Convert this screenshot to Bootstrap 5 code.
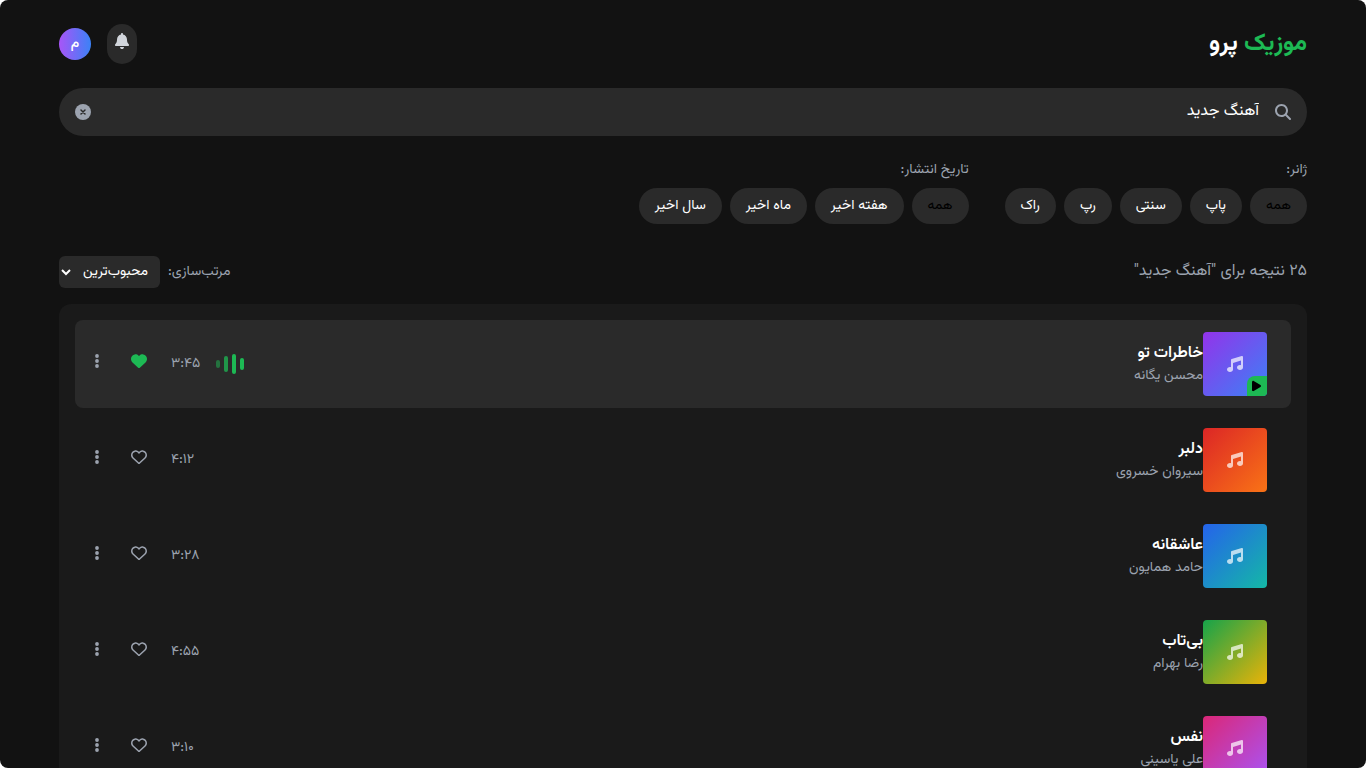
<!DOCTYPE html>
<html lang="fa" dir="rtl">
<head>
<meta charset="utf-8">
<meta name="viewport" content="width=device-width, initial-scale=1">
<title>موزیک پرو</title>
<link href="https://cdn.jsdelivr.net/npm/bootstrap@5.3.0/dist/css/bootstrap.min.css" rel="stylesheet">
<style>
  html, body { background: #fff; }
  body { font-family: Vazirmatn, Vazir, "DejaVu Sans", sans-serif; font-size: 16px; line-height: 24px; color: #fff; }
  .app-shell { background: #121212; border-radius: 8px; overflow-y: auto; scrollbar-width: none; }
  .app-shell::-webkit-scrollbar { display: none; }
  .app-wrap { max-width: 1280px; }
  .brand { font-size: 24px; line-height: 32px; }
  .muted { color: #9ca3af; }
  .accent { color: #1db954; }
  .text-14 { font-size: 14px; line-height: 20px; }
  .icon { width: 16px; height: 16px; fill: currentColor; display: block; }
  .bell-btn { background: #2a2a2a; color: #d1d5db; height: 40px; padding: 8px 8px 14px; }
  .bell-btn .icon { width: 14px; }
  .avatar { width: 32px; height: 32px; font-weight: 500; background: linear-gradient(to right, #a855f7, #3b82f6); }
  .search-input, .search-input:focus { background: #2a2a2a; color: #fff; height: 48px; padding: 0 48px 2px; font-size: 16px; }
  .search-side { width: 16px; top: 16px; }
  .search-side.start { right: 16px; }
  .search-side.end { left: 16px; }
  .chip { background: #2a2a2a; color: #fff; height: 36px; padding: 0 16px; }
  .chip.on { color: #000; }
  .filters { column-gap: 36px; row-gap: 16px; }
  .sort-select { background: #2a2a2a; color: #fff; height: 32px; border-radius: 6px; padding: 0 8px; }
  .panel { background: #1a1a1a; border-radius: 12px; }
  .song { padding: 12px; border-radius: 8px; }
  .song.playing { background: #2a2a2a; }
  .song-title { font-size: 16px; line-height: 24px; font-weight: 600; }
  .cover { width: 64px; height: 64px; border-radius: 4px; margin-right: 12px; color: rgba(255,255,255,.7); }
  .c1 { background: linear-gradient(to bottom right, #9333ea, #3b82f6); }
  .c2 { background: linear-gradient(to bottom right, #dc2626, #f97316); }
  .c3 { background: linear-gradient(to bottom right, #2563eb, #14b8a6); }
  .c4 { background: linear-gradient(to bottom right, #16a34a, #eab308); }
  .c5 { background: linear-gradient(to bottom right, #db2777, #a855f7); }
  .play-badge { width: 20px; height: 20px; right: 0; bottom: 0; padding-right: 1px; background: #1db954; color: #000; border-radius: 8px 0 4px 0; }
  .play-badge .icon { width: 9px; height: 12px; }
  .icon-btn { padding: 0 8px 6px; color: #9ca3af; }
  .icon-btn.liked { color: #1db954; }
  .dots .icon { width: 4px; }
  .eq span { width: 4px; border-radius: 2px; background: #1db954; }
  .h1x { height: 12px; } .h2x { height: 20px; } .h3x { height: 16px; } .h4x { height: 8px; }
</style>
</head>
<body>
<svg class="d-none" xmlns="http://www.w3.org/2000/svg">
  <symbol id="bell" viewBox="0 0 448 512"><path d="M224 0c-17.7 0-32 14.3-32 32V51.2C119 66 64 130.6 64 208v18.8c0 47-17.3 92.4-48.5 127.6l-7.4 8.3c-8.4 9.4-10.4 22.9-5.3 34.4S19.4 416 32 416H416c12.6 0 24-7.4 29.2-18.9s3.1-25-5.3-34.4l-7.4-8.3C401.3 319.2 384 273.9 384 226.8V208c0-77.4-55-142-128-156.8V32c0-17.7-14.3-32-32-32zm45.3 493.3c12-12 18.7-28.3 18.7-45.3H160c0 17 6.7 33.3 18.7 45.3s28.3 18.7 45.3 18.7s33.3-6.7 45.3-18.7z"/></symbol>
  <symbol id="search" viewBox="0 0 512 512"><path d="M416 208c0 45.9-14.9 88.3-40 122.7L502.6 457.4c12.5 12.5 12.5 32.8 0 45.3s-32.8 12.5-45.3 0L330.7 376c-34.4 25.2-76.8 40-122.7 40C93.1 416 0 322.9 0 208S93.1 0 208 0S416 93.1 416 208zM208 352a144 144 0 1 0 0-288 144 144 0 1 0 0 288z"/></symbol>
  <symbol id="clear" viewBox="0 0 16 16"><circle cx="8" cy="8" r="8"/><path d="M6 6l4 4M10 6l-4 4" stroke="#2a2a2a" stroke-width="1.5" stroke-linecap="round"/></symbol>
  <symbol id="note" viewBox="0 0 512 512"><path d="M499.1 6.3c8.1 6 12.9 15.6 12.9 25.7v72V368c0 44.2-43 80-96 80s-96-35.8-96-80s43-80 96-80c11.2 0 22 1.6 32 4.6V147L192 223.8V432c0 44.2-43 80-96 80s-96-35.8-96-80s43-80 96-80c11.2 0 22 1.6 32 4.6V200 128c0-14.1 9.3-26.6 22.8-30.7l320-96c9.7-2.9 20.2-1.1 28.3 5z"/></symbol>
  <symbol id="heart" viewBox="0 0 512 512"><path d="M47.6 300.4L228.3 469.1c7.5 7 17.4 10.9 27.7 10.9s20.2-3.9 27.7-10.9L464.4 300.4c30.4-28.3 47.6-68 47.6-109.5v-5.8c0-69.9-50.5-129.5-119.4-141C347 36.5 300.6 51.4 268 84L256 96 244 84c-32.6-32.6-79-47.5-124.6-39.9C50.5 55.6 0 115.2 0 185.1v5.8c0 41.5 17.2 81.2 47.6 109.5z"/></symbol>
  <symbol id="heart-o" viewBox="0 0 512 512"><path d="M225.8 468.2l-2.5-2.3L48.1 303.2C17.4 274.7 0 234.7 0 192.8v-3.3c0-70.4 50-130.8 119.2-144C158.6 37.9 198.9 47 231 69.6c9 6.4 17.4 13.8 25 22.3c4.2-4.8 8.7-9.2 13.5-13.3c3.7-3.2 7.5-6.2 11.5-9C313.1 47 353.4 37.9 392.8 45.4C462 58.6 512 119.1 512 189.5v3.3c0 41.9-17.4 81.9-48.1 110.4L288.7 465.9l-2.5 2.3c-8.2 7.6-19 11.9-30.2 11.9s-22-4.2-30.2-11.9zM239.1 145c-.4-.3-.7-.7-1-1.1l-17.8-20c-23.1-25.9-58-37.7-92-31.2C81.6 101.5 48 142.1 48 189.5v3.3c0 28.5 11.9 55.8 32.8 75.2L256 430.7 431.2 268c20.9-19.4 32.8-46.7 32.8-75.2v-3.3c0-47.3-33.6-88-80.1-96.9c-34-6.5-69 5.4-92 31.2l-17.8 20c-.3 .4-.7 .7-1 1.1c-4.5 4.5-10.6 7-16.9 7s-12.4-2.5-16.9-7z"/></symbol>
  <symbol id="dots" viewBox="0 0 4 16"><circle cx="2" cy="3" r="1.9"/><circle cx="2" cy="8" r="1.9"/><circle cx="2" cy="13" r="1.9"/></symbol>
  <symbol id="play" viewBox="0 0 384 512"><path d="M73 39c-14.8-9.1-33.4-9.4-48.5-.9S0 62.6 0 80V432c0 17.4 9.4 33.4 24.5 41.9s33.7 8.1 48.5-.9L361 297c14.3-8.7 23-24.2 23-41s-8.7-32.2-23-41L73 39z"/></symbol>
</svg>
<div class="app-shell vh-100">
  <div class="app-wrap container-fluid px-3 py-4">
    <header class="d-flex justify-content-between align-items-center mb-4">
      <h1 class="brand fw-bold mb-0"><span class="accent">موزیک</span> پرو</h1>
      <div class="d-flex align-items-center gap-3">
        <button type="button" class="bell-btn border-0 rounded-pill" aria-label="اعلان‌ها"><svg class="icon"><use href="#bell"/></svg></button>
        <div class="avatar text-14 rounded-circle d-flex align-items-center justify-content-center">م</div>
      </div>
    </header>

    <form class="position-relative mb-4" role="search">
      <input type="text" class="search-input form-control border-0 rounded-pill" value="آهنگ جدید" aria-label="جستجو">
      <svg class="icon search-side start position-absolute muted"><use href="#search"/></svg>
      <button type="button" class="search-side end position-absolute border-0 bg-transparent p-0 muted" aria-label="پاک کردن"><svg class="icon"><use href="#clear"/></svg></button>
    </form>

    <div class="filters d-flex flex-wrap mb-4 pb-2">
      <section>
        <h2 class="text-14 fw-normal muted mb-2">ژانر:</h2>
        <div class="d-flex flex-wrap gap-2">
          <button type="button" class="chip on text-14 border-0 rounded-pill">همه</button>
          <button type="button" class="chip text-14 border-0 rounded-pill">پاپ</button>
          <button type="button" class="chip text-14 border-0 rounded-pill">سنتی</button>
          <button type="button" class="chip text-14 border-0 rounded-pill">رپ</button>
          <button type="button" class="chip text-14 border-0 rounded-pill">راک</button>
        </div>
      </section>
      <section>
        <h2 class="text-14 fw-normal muted mb-2">تاریخ انتشار:</h2>
        <div class="d-flex flex-wrap gap-2">
          <button type="button" class="chip on text-14 border-0 rounded-pill">همه</button>
          <button type="button" class="chip text-14 border-0 rounded-pill">هفته اخیر</button>
          <button type="button" class="chip text-14 border-0 rounded-pill">ماه اخیر</button>
          <button type="button" class="chip text-14 border-0 rounded-pill">سال اخیر</button>
        </div>
      </section>
    </div>

    <div class="d-flex justify-content-between align-items-center mb-3">
      <p class="muted mb-0">۲۵ نتیجه برای "آهنگ جدید"</p>
      <div class="d-flex align-items-center gap-2">
        <label for="sort" class="text-14 muted">مرتب‌سازی:</label>
        <select id="sort" class="sort-select text-14 border-0"><option>محبوب‌ترین</option></select>
      </div>
    </div>

    <main class="panel p-3 d-flex flex-column gap-2">
      <article class="song playing d-flex align-items-center">
        <div class="cover c1 position-relative flex-shrink-0 d-flex align-items-center justify-content-center"><svg class="icon"><use href="#note"/></svg><span class="play-badge position-absolute d-flex align-items-center justify-content-center"><svg class="icon"><use href="#play"/></svg></span></div>
        <div class="flex-grow-1"><h3 class="song-title mb-0">خاطرات تو</h3><p class="text-14 muted mb-0">محسن یگانه</p></div>
        <div class="d-flex align-items-center gap-3">
          <div class="eq d-flex align-items-center gap-1"><span class="h1x"></span><span class="h2x"></span><span class="h3x opacity-75"></span><span class="h4x opacity-50"></span></div>
          <span class="text-14 muted">۳:۴۵</span>
          <button type="button" class="icon-btn liked border-0 bg-transparent" aria-label="پسندیدن"><svg class="icon"><use href="#heart"/></svg></button>
          <button type="button" class="icon-btn dots border-0 bg-transparent" aria-label="بیشتر"><svg class="icon"><use href="#dots"/></svg></button>
        </div>
      </article>
      <article class="song d-flex align-items-center">
        <div class="cover c2 flex-shrink-0 d-flex align-items-center justify-content-center"><svg class="icon"><use href="#note"/></svg></div>
        <div class="flex-grow-1"><h3 class="song-title mb-0">دلبر</h3><p class="text-14 muted mb-0">سیروان خسروی</p></div>
        <div class="d-flex align-items-center gap-3">
          <span class="text-14 muted">۴:۱۲</span>
          <button type="button" class="icon-btn border-0 bg-transparent" aria-label="پسندیدن"><svg class="icon"><use href="#heart-o"/></svg></button>
          <button type="button" class="icon-btn dots border-0 bg-transparent" aria-label="بیشتر"><svg class="icon"><use href="#dots"/></svg></button>
        </div>
      </article>
      <article class="song d-flex align-items-center">
        <div class="cover c3 flex-shrink-0 d-flex align-items-center justify-content-center"><svg class="icon"><use href="#note"/></svg></div>
        <div class="flex-grow-1"><h3 class="song-title mb-0">عاشقانه</h3><p class="text-14 muted mb-0">حامد همایون</p></div>
        <div class="d-flex align-items-center gap-3">
          <span class="text-14 muted">۳:۲۸</span>
          <button type="button" class="icon-btn border-0 bg-transparent" aria-label="پسندیدن"><svg class="icon"><use href="#heart-o"/></svg></button>
          <button type="button" class="icon-btn dots border-0 bg-transparent" aria-label="بیشتر"><svg class="icon"><use href="#dots"/></svg></button>
        </div>
      </article>
      <article class="song d-flex align-items-center">
        <div class="cover c4 flex-shrink-0 d-flex align-items-center justify-content-center"><svg class="icon"><use href="#note"/></svg></div>
        <div class="flex-grow-1"><h3 class="song-title mb-0">بی‌تاب</h3><p class="text-14 muted mb-0">رضا بهرام</p></div>
        <div class="d-flex align-items-center gap-3">
          <span class="text-14 muted">۴:۵۵</span>
          <button type="button" class="icon-btn border-0 bg-transparent" aria-label="پسندیدن"><svg class="icon"><use href="#heart-o"/></svg></button>
          <button type="button" class="icon-btn dots border-0 bg-transparent" aria-label="بیشتر"><svg class="icon"><use href="#dots"/></svg></button>
        </div>
      </article>
      <article class="song d-flex align-items-center">
        <div class="cover c5 flex-shrink-0 d-flex align-items-center justify-content-center"><svg class="icon"><use href="#note"/></svg></div>
        <div class="flex-grow-1"><h3 class="song-title mb-0">نفس</h3><p class="text-14 muted mb-0">علی یاسینی</p></div>
        <div class="d-flex align-items-center gap-3">
          <span class="text-14 muted">۳:۱۰</span>
          <button type="button" class="icon-btn border-0 bg-transparent" aria-label="پسندیدن"><svg class="icon"><use href="#heart-o"/></svg></button>
          <button type="button" class="icon-btn dots border-0 bg-transparent" aria-label="بیشتر"><svg class="icon"><use href="#dots"/></svg></button>
        </div>
      </article>
    </main>
  </div>
</div>
<script src="https://cdn.jsdelivr.net/npm/bootstrap@5.3.0/dist/js/bootstrap.bundle.min.js"></script>
</body>
</html>
